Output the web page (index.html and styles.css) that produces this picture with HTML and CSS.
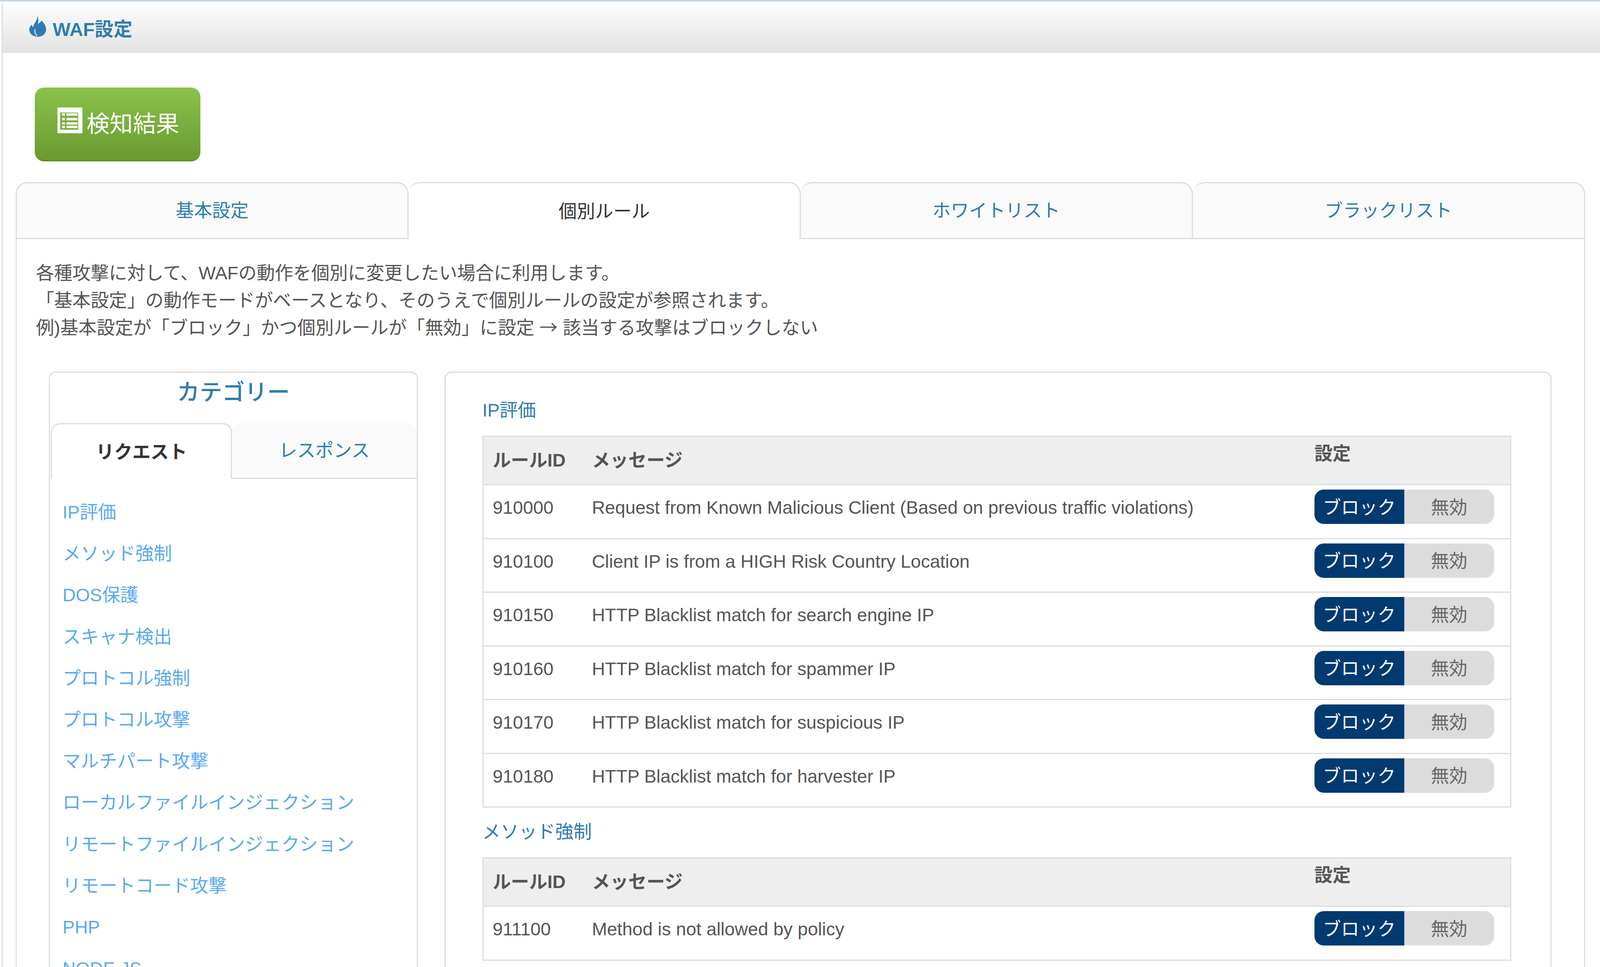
FILE: index.html
```html
<!DOCTYPE html>
<html lang="ja">

<head>
    <meta charset="UTF-8">
    <title>WAF設定</title>
    <link rel="stylesheet" href="styles.css">
</head>

<body>
    <div class="top-strip"></div>
    <div class="panel">
        <div class="panel-head">
            <svg class="flame" viewBox="0 0 45 53">
                <path fill="#2f7cb0" d="M23 0C26 6 25 13 24 20 28 18 32 15 33 11 39 18 45 24 45 34 45 45 36 53 25 53 12 53 2 46 2 35 2 29 5 25 9 22 9 25 10 27 12 29 12 20 23 12 23 0Z" />
                <path fill="none" stroke="#e6eef3" stroke-width="2.5" d="M17 34C15 40 17 46 22 51" />
            </svg>
            <span class="panel-title">WAF設定</span>
        </div>
        <div class="panel-body">
            <a class="result-btn">
                <svg class="list-icon" viewBox="0 0 64 66">
                    <path fill="#fff" fill-rule="evenodd" d="M0 0h64v66H0zM7 13v44h46V13z" />
                    <g fill="#fff">
                        <rect x="12" y="15" width="7" height="6" />
                        <rect x="23" y="15" width="28" height="6" />
                        <rect x="12" y="27" width="7" height="6" />
                        <rect x="23" y="27" width="28" height="6" />
                        <rect x="12" y="38" width="7" height="6" />
                        <rect x="23" y="38" width="28" height="6" />
                        <rect x="12" y="47" width="7" height="6" />
                        <rect x="23" y="47" width="28" height="6" />
                    </g>
                </svg>
                検知結果
            </a>

            <div class="tabs">
                <div class="tab">基本設定</div>
                <div class="tab active">個別ルール</div>
                <div class="tab">ホワイトリスト</div>
                <div class="tab">ブラックリスト</div>
            </div>

            <div class="tab-content">
                <p class="desc">
                    各種攻撃に対して、WAFの動作を個別に変更したい場合に利用します。<br>
                    「基本設定」の動作モードがベースとなり、そのうえで個別ルールの設定が参照されます。<br>
                    例)基本設定が「ブロック」かつ個別ルールが「無効」に設定 <span class="arrow">→</span> 該当する攻撃はブロックしない
                </p>

                <div class="columns">
                    <div class="category">
                        <h2 class="category-title">カテゴリー</h2>
                        <div class="cat-tabs">
                            <div class="cat-tab active">リクエスト</div>
                            <div class="cat-tab">レスポンス</div>
                        </div>
                        <ul class="cat-list">
                            <li>IP評価</li>
                            <li>メソッド強制</li>
                            <li>DOS保護</li>
                            <li>スキャナ検出</li>
                            <li>プロトコル強制</li>
                            <li>プロトコル攻撃</li>
                            <li>マルチパート攻撃</li>
                            <li>ローカルファイルインジェクション</li>
                            <li>リモートファイルインジェクション</li>
                            <li>リモートコード攻撃</li>
                            <li>PHP</li>
                            <li>NODE JS</li>
                        </ul>
                    </div>

                    <div class="rules">
                        <h3 class="section-title">IP評価</h3>
                        <table class="rule-table">
                            <colgroup>
                                <col class="col-id">
                                <col class="col-msg">
                                <col class="col-set">
                            </colgroup>
                            <thead>
                                <tr>
                                    <th>ルールID</th>
                                    <th>メッセージ</th>
                                    <th class="th-set">設定</th>
                                </tr>
                            </thead>
                            <tbody>
                                <tr>
                                    <td>910000</td>
                                    <td>Request from Known Malicious Client (Based on previous traffic violations)</td>
                                    <td><div class="toggle"><span class="on">ブロック</span><span class="off">無効</span></div></td>
                                </tr>
                                <tr>
                                    <td>910100</td>
                                    <td>Client IP is from a HIGH Risk Country Location</td>
                                    <td><div class="toggle"><span class="on">ブロック</span><span class="off">無効</span></div></td>
                                </tr>
                                <tr>
                                    <td>910150</td>
                                    <td>HTTP Blacklist match for search engine IP</td>
                                    <td><div class="toggle"><span class="on">ブロック</span><span class="off">無効</span></div></td>
                                </tr>
                                <tr>
                                    <td>910160</td>
                                    <td>HTTP Blacklist match for spammer IP</td>
                                    <td><div class="toggle"><span class="on">ブロック</span><span class="off">無効</span></div></td>
                                </tr>
                                <tr>
                                    <td>910170</td>
                                    <td>HTTP Blacklist match for suspicious IP</td>
                                    <td><div class="toggle"><span class="on">ブロック</span><span class="off">無効</span></div></td>
                                </tr>
                                <tr>
                                    <td>910180</td>
                                    <td>HTTP Blacklist match for harvester IP</td>
                                    <td><div class="toggle"><span class="on">ブロック</span><span class="off">無効</span></div></td>
                                </tr>
                            </tbody>
                        </table>

                        <h3 class="section-title second">メソッド強制</h3>
                        <table class="rule-table">
                            <colgroup>
                                <col class="col-id">
                                <col class="col-msg">
                                <col class="col-set">
                            </colgroup>
                            <thead>
                                <tr>
                                    <th>ルールID</th>
                                    <th>メッセージ</th>
                                    <th class="th-set">設定</th>
                                </tr>
                            </thead>
                            <tbody>
                                <tr>
                                    <td>911100</td>
                                    <td>Method is not allowed by policy</td>
                                    <td><div class="toggle"><span class="on">ブロック</span><span class="off">無効</span></div></td>
                                </tr>
                            </tbody>
                        </table>
                    </div>
                </div>
            </div>
        </div>
    </div>
</body>

</html>
```

FILE: styles.css
```css
* {
    box-sizing: border-box;
}

html,
body {
    margin: 0;
    height: 2475px;
    overflow: hidden;
    background: #fff;
}

body {
    font-family: "Liberation Sans", "Noto Sans CJK JP", sans-serif;
    font-size: 1.14vw;
    color: #555;
}

.top-strip {
    height: 4px;
    background: #c5d5e2;
    margin-bottom: 5px;
}

.panel {
    margin-left: 4px;
    border-left: 3px solid #ddd;
}

.panel-head {
    height: 126px;
    display: flex;
    align-items: center;
    padding-left: 1.61vw;
    background: linear-gradient(#fdfdfd, #e3e3e3);
    border-bottom: 2px solid #dcdcdc;
}

.flame {
    width: 45px;
    height: 53px;
    margin-right: 17px;
    margin-top: -7px;
}

.panel-title {
    font-size: 1.18vw;
    font-weight: bold;
    color: #2f7cb0;
}

.panel-body {
    padding-top: 89px;
}

.result-btn {
    display: flex;
    align-items: center;
    width: 10.36vw;
    height: 189px;
    margin-left: 2vw;
    padding: 0 0 10px 1.43vw;
    border-radius: 24px;
    border-bottom: 3px solid #5a8a26;
    background: linear-gradient(#8bc24a, #6a9a32);
    color: #fff;
    font-size: 1.45vw;
}

.list-icon {
    width: 64px;
    height: 66px;
    margin-right: 10px;
    margin-top: -8px;
}

.tabs {
    display: flex;
    margin: 53px 0 0 0.8vw;
    width: 98.09vw;
}

.tab {
    flex: 1;
    height: 146px;
    display: flex;
    align-items: center;
    justify-content: center;
    padding-bottom: 10px;
    background: #fafafa;
    border: 3px solid #ddd;
    border-left-width: 0;
    border-radius: 30px 30px 0 0;
    color: #2f7cb0;
}

.tab:first-child {
    border-left-width: 3px;
}

.tab.active {
    background: #fff;
    border-bottom-color: #fff;
    color: #333;
    padding-bottom: 6px;
}

.tab-content {
    margin-left: 0.8vw;
    width: 98.09vw;
    height: 1863px;
    padding: 52px 0 0 1.2vw;
    border-left: 3px solid #ddd;
    border-right: 3px solid #ddd;
}

.desc {
    margin: 0;
    line-height: 70px;
}

.arrow {
    font-family: "Noto Sans CJK JP", sans-serif;
    line-height: 1;
}

.columns {
    display: flex;
    gap: 1.66vw;
    margin: 77px 0 0 0.82vw;
}

.category {
    width: 23.05vw;
    height: 1524px;
    overflow: hidden;
    border: 3px solid #ddd;
    border-bottom: none;
    border-radius: 18px 18px 0 0;
}

.category-title {
    margin: 0;
    height: 129px;
    line-height: 100px;
    text-align: center;
    font-size: 1.41vw;
    font-weight: 500;
    color: #2f7cb0;
}

.cat-tabs {
    display: flex;
    height: 143px;
    margin-left: 2px;
}

.cat-tab {
    flex: 1;
    display: flex;
    align-items: center;
    justify-content: center;
    padding-bottom: 10px;
    background: #fafafa;
    border-bottom: 3px solid #ddd;
    border-radius: 24px 24px 0 0;
    color: #2f7cb0;
}

.cat-tab.active {
    flex: none;
    width: 49.5%;
    background: #fff;
    border: 3px solid #ddd;
    border-bottom: none;
    color: #333;
    font-weight: bold;
    padding-bottom: 8px;
}

.cat-list {
    list-style: none;
    margin: 0;
    padding: 32px 0 0 0.77vw;
    color: #5aa9f2;
}

.cat-list li {
    height: 106.2px;
    line-height: 106px;
}

.rules {
    width: 69.2vw;
    height: 1524px;
    padding: 61px 2.45vw 0 2.3vw;
    border: 3px solid #ddd;
    border-bottom: none;
    border-radius: 18px 18px 0 0;
}

.section-title {
    margin: 0 0 30px;
    height: 70px;
    line-height: 70px;
    font-size: 1.14vw;
    font-weight: normal;
    color: #2f7cb0;
}

.section-title.second {
    margin-top: 27px;
}

.rule-table {
    width: 100%;
    table-layout: fixed;
    border-collapse: collapse;
    border: 3px solid #ddd;
}

.col-id {
    width: 10.6%;
}

.col-msg {
    width: 70.3%;
}

.col-set {
    width: 19.1%;
}

.rule-table th {
    height: 124px;
    padding: 0 0 10px;
    text-align: left;
    background: #eee;
    font-weight: bold;
    border-bottom: 3px solid #ddd;
}

.rule-table th:first-child,
.rule-table td:first-child {
    padding-left: 0.57vw;
}

.rule-table .th-set {
    padding-bottom: 44px;
}

.rule-table td {
    height: 137.5px;
    padding: 0 0 20px;
    border-bottom: 3px solid #ddd;
}

.toggle {
    display: flex;
    width: 11.23vw;
    height: 88px;
    margin-bottom: 4px;
    border-radius: 24px;
    overflow: hidden;
}

.toggle span {
    flex: 1;
    display: flex;
    align-items: center;
    justify-content: center;
    padding-bottom: 6px;
}

.on {
    background: #003a70;
    color: #fff;
}

.off {
    background: #dcdcdc;
    color: #666;
}
```
